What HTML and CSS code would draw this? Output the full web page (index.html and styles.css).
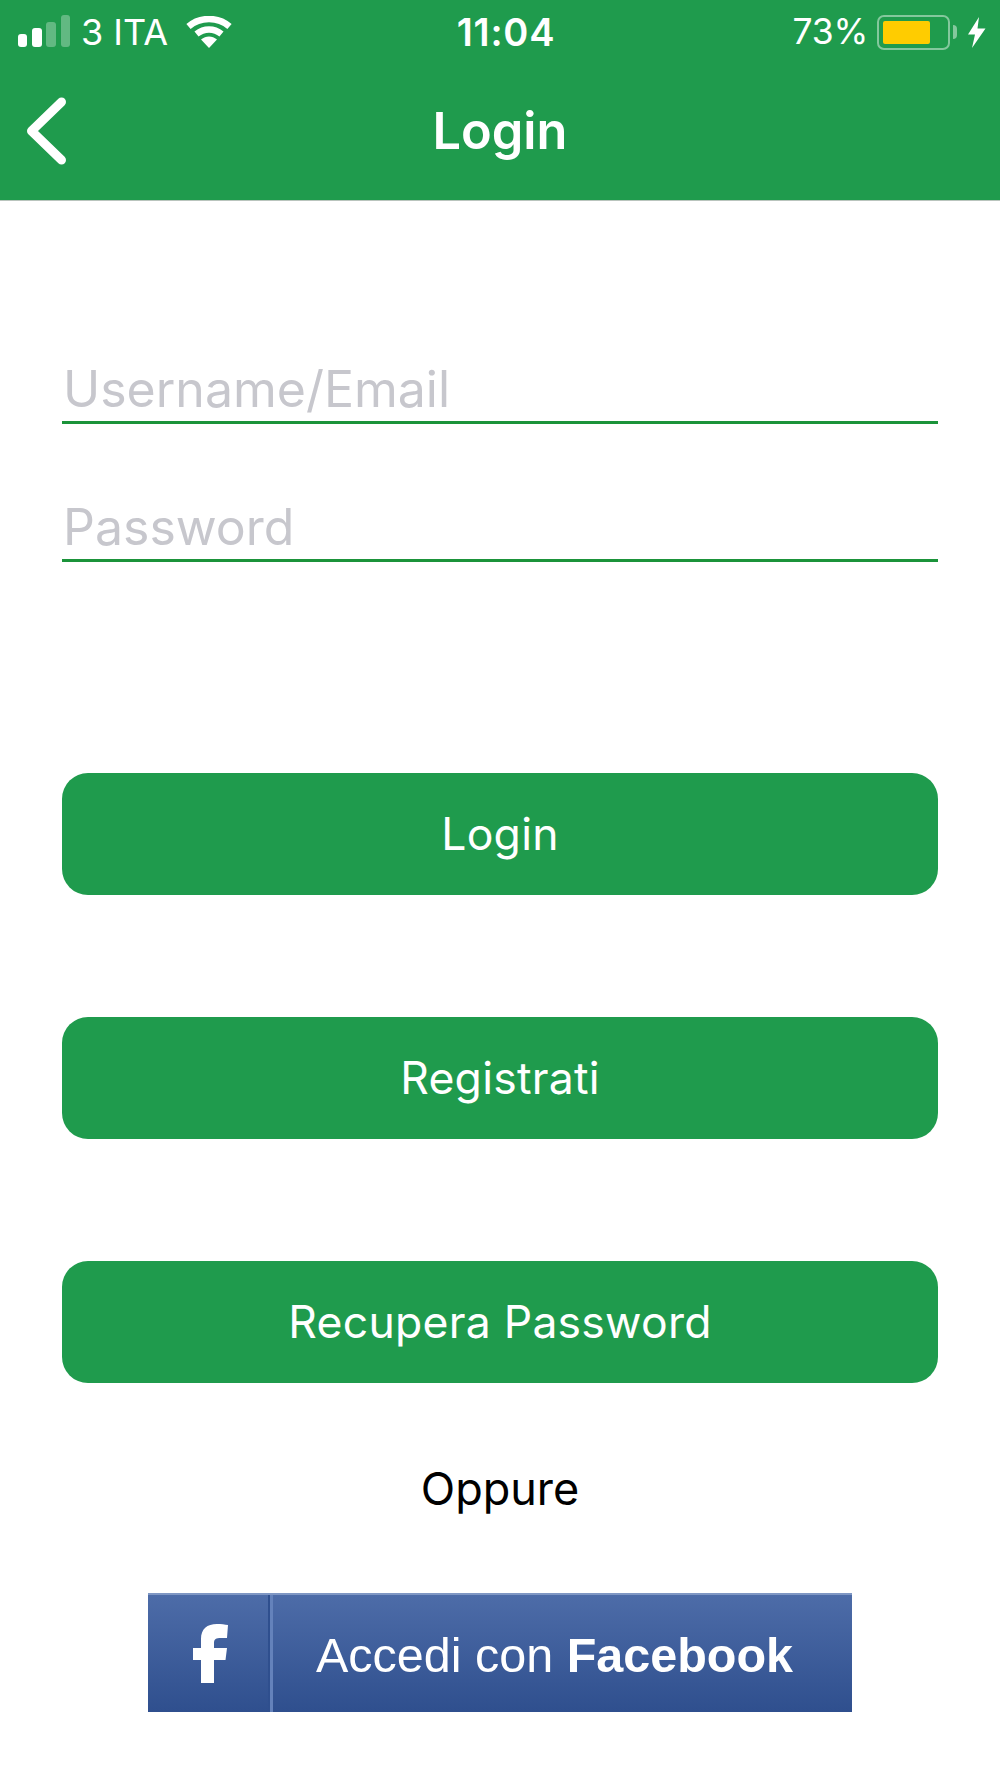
FILE: index.html
```html
<!DOCTYPE html>
<html lang="it">
<head>
<meta charset="utf-8">
<title>Login</title>
<link rel="stylesheet" href="styles.css">
</head>
<body>
<header class="top">
  <div class="status">
    <div class="status-left">
      <svg class="signal" width="54" height="34" viewBox="0 0 54 34">
        <rect x="0" y="19" width="9" height="13" rx="3" fill="#fff"/>
        <rect x="14" y="13" width="10" height="19" rx="3" fill="#fff"/>
        <rect x="28" y="7" width="10" height="25" rx="3" fill="#fff" opacity=".3"/>
        <rect x="43" y="0" width="9" height="32" rx="3" fill="#fff" opacity=".3"/>
      </svg>
      <span class="carrier">3 ITA</span>
      <svg class="wifi" width="46" height="33" viewBox="0 0 46 33">
        <path d="M2.500 10.500C14 0.500 32 0.500 43.500 10.500" fill="none" stroke="#fff" stroke-width="6.500"/>
        <path d="M10.500 18C18 12 28 12 35.500 18" fill="none" stroke="#fff" stroke-width="6.500"/>
        <path d="M15 23.500C20 19.500 26 19.500 31 23.500L23 32Z" fill="#fff"/>
      </svg>
    </div>
    <div class="clock">11:04</div>
    <div class="status-right">
      <span class="percent">73%</span>
      <div class="battery"><div class="battery-fill"></div></div>
      <div class="battery-nub"></div>
      <svg class="bolt" width="19" height="31" viewBox="0 0 19 31">
        <path d="M12 0L1 17.500H8L5 31L18.500 11.500H10.500Z" fill="#fff"/>
      </svg>
    </div>
  </div>
  <div class="nav">
    <svg class="back" width="44" height="70" viewBox="0 0 44 70">
      <path d="M37.500 6L7.500 35L37.500 64" fill="none" stroke="#fff" stroke-width="9" stroke-linecap="round" stroke-linejoin="round"/>
    </svg>
    <h1 class="title">Login</h1>
  </div>
</header>
<main class="content">
  <div class="fields">
    <div class="field">Username/Email</div>
    <div class="field">Password</div>
  </div>
  <div class="actions">
    <div class="btn">Login</div>
    <div class="btn">Registrati</div>
    <div class="btn">Recupera Password</div>
  </div>
  <div class="or">Oppure</div>
  <div class="fb">
    <div class="fb-icon">
      <svg width="35" height="59" viewBox="0 0 35 59">
        <path d="M8 59V36H0V24H8V15C8 5 14 0 24 0C28 0 32 0.500 35 1L34 14H28C23 14 21 15 21 19V24H34L32.500 36H21V59Z" fill="#fff"/>
      </svg>
    </div>
    <div class="fb-text">Accedi con <b>Facebook</b></div>
  </div>
</main>
</body>
</html>
```
FILE: styles.css
```css
* { box-sizing: border-box; }
html, body { margin: 0; padding: 0; background: #fff; }
body { width: 1000px; height: 1778px; overflow: hidden; font-family: Inter, "Liberation Sans", sans-serif; color: #000; }

.top { height: 201px; background: #1f9b4d; border-bottom: 1px solid #b9c4bd; color: #fff; }

.status { height: 62px; padding: 0 14px 0 18px; display: grid; grid-template-columns: 1fr auto 1fr; align-items: center; }
.status-left { display: flex; align-items: center; }
.status-right { display: flex; align-items: center; justify-content: flex-end; }
.carrier { font-size: 36px; margin-left: 9px; line-height: 64px; }
.wifi { margin-left: 18px; }
.clock { margin-left: 8px; font-size: 38px; font-weight: 600; letter-spacing: .8px; line-height: 64px; }
.percent { font-size: 35.500px; line-height: 64px; letter-spacing: -.3px; }
.battery { width: 73px; height: 35px; margin-left: 9px; padding: 4px; border: 2px solid rgba(255,255,255,.45); border-radius: 7px; }
.battery-fill { width: 47px; height: 100%; background: #fc0; border-radius: 2px; }
.battery-nub { width: 4px; height: 14px; margin-left: 3px; background: rgba(255,255,255,.45); border-radius: 0 7px 7px 0; }
.bolt { margin-left: 10px; }

.nav { height: 138px; position: relative; display: flex; align-items: center; justify-content: center; }
.back { position: absolute; left: 24px; top: 34px; }
.title { margin: 0; font-size: 50.500px; font-weight: 600; line-height: 60px; }

.content { padding: 0 62px; display: flex; flex-direction: column; }
.fields { padding-top: 151px; display: flex; flex-direction: column; gap: 66px; }
.field { height: 72px; line-height: 74px; padding-left: 1px; font-size: 50px; color: #c7c7cd; border-bottom: 3px solid #1b933a; }

.actions { margin-top: 211px; display: flex; flex-direction: column; gap: 122px; }
.btn { height: 122px; border-radius: 26px; background: #1f9b4d; color: #fff; font-size: 44.500px; letter-spacing: .25px; line-height: 122px; text-align: center; }

.or { margin-top: 76px; height: 60px; line-height: 60px; text-align: center; font-size: 45px; }

.fb { margin-top: 74px; align-self: center; width: 704px; height: 119px; display: flex; color: #fff; background: linear-gradient(#4d6ca8, #2f4f8e); border-top: 2px solid #7f97c4; }
.fb-icon { width: 125px; display: flex; align-items: center; justify-content: center; border-right: 3px solid #6482bb; box-shadow: inset -2px 0 0 #2f4f8e; padding-left: 3px; }
.fb-text { flex: 1; font-family: "Liberation Sans", Arial, sans-serif; font-size: 48.500px; line-height: 120px; text-align: center; padding-right: 16px; white-space: nowrap; }
```
